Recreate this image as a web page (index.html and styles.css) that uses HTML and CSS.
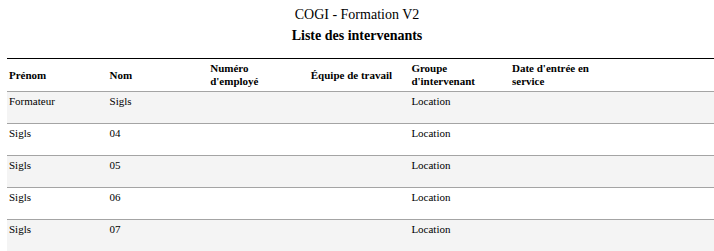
FILE: index.html
```html
<!DOCTYPE html>
<html lang="fr">
<head>
<meta charset="utf-8">
<title>COGI - Formation V2</title>
<link rel="stylesheet" href="styles.css">
</head>
<body>
<header class="page-head">
  <div class="app-title">COGI - Formation V2</div>
  <h1 class="list-title">Liste des intervenants</h1>
</header>
<div class="table-wrap">
<table class="grid">
  <colgroup>
    <col class="c"><col class="c"><col class="c"><col class="c"><col class="c"><col class="c"><col>
  </colgroup>
  <thead>
    <tr>
      <th>Prénom</th>
      <th>Nom</th>
      <th>Numéro<br>d'employé</th>
      <th>Équipe de travail</th>
      <th>Groupe<br>d'intervenant</th>
      <th>Date d'entrée en<br>service</th>
      <th></th>
    </tr>
  </thead>
  <tbody>
    <tr><td>Formateur</td><td>Sigls</td><td></td><td></td><td>Location</td><td></td><td></td></tr>
    <tr><td>Sigls</td><td>04</td><td></td><td></td><td>Location</td><td></td><td></td></tr>
    <tr><td>Sigls</td><td>05</td><td></td><td></td><td>Location</td><td></td><td></td></tr>
    <tr><td>Sigls</td><td>06</td><td></td><td></td><td>Location</td><td></td><td></td></tr>
    <tr><td>Sigls</td><td>07</td><td></td><td></td><td>Location</td><td></td><td></td></tr>
  </tbody>
</table>
</div>
</body>
</html>
```
FILE: styles.css
```css
html, body {
  margin: 0;
  padding: 0;
  background: #ffffff;
  color: #000000;
  font-family: "Liberation Serif", "Times New Roman", serif;
}

.page-head {
  text-align: center;
  padding-top: 5px;
}

.app-title {
  font-size: 14px;
  line-height: 20px;
}

.list-title {
  margin: 1px 0 0 0;
  font-size: 14px;
  line-height: 20px;
  font-weight: bold;
}

.table-wrap {
  padding-left: 7px;
  margin-top: 12px;
}

.grid {
  width: 100%;
  border-collapse: separate;
  border-spacing: 0;
  table-layout: fixed;
  font-family: "Liberation Serif", "Times New Roman", serif;
  font-size: 11px;
}

.grid col.c {
  width: 100.6px;
}

.grid th {
  height: 34px;
  padding: 0 2px;
  box-sizing: border-box;
  border-top: 1px solid #000000;
  border-bottom: 1px solid #a4a4a4;
  text-align: left;
  vertical-align: middle;
  font-weight: bold;
  line-height: 13px;
}

.grid td {
  height: 32px;
  padding: 2px 2px 0 2px;
  box-sizing: border-box;
  border-bottom: 1px solid #a4a4a4;
  vertical-align: top;
  line-height: 14px;
}

.grid tbody tr:nth-child(odd) {
  background: #f4f4f4;
}

.grid tbody tr:last-child td {
  border-bottom: none;
}
```
